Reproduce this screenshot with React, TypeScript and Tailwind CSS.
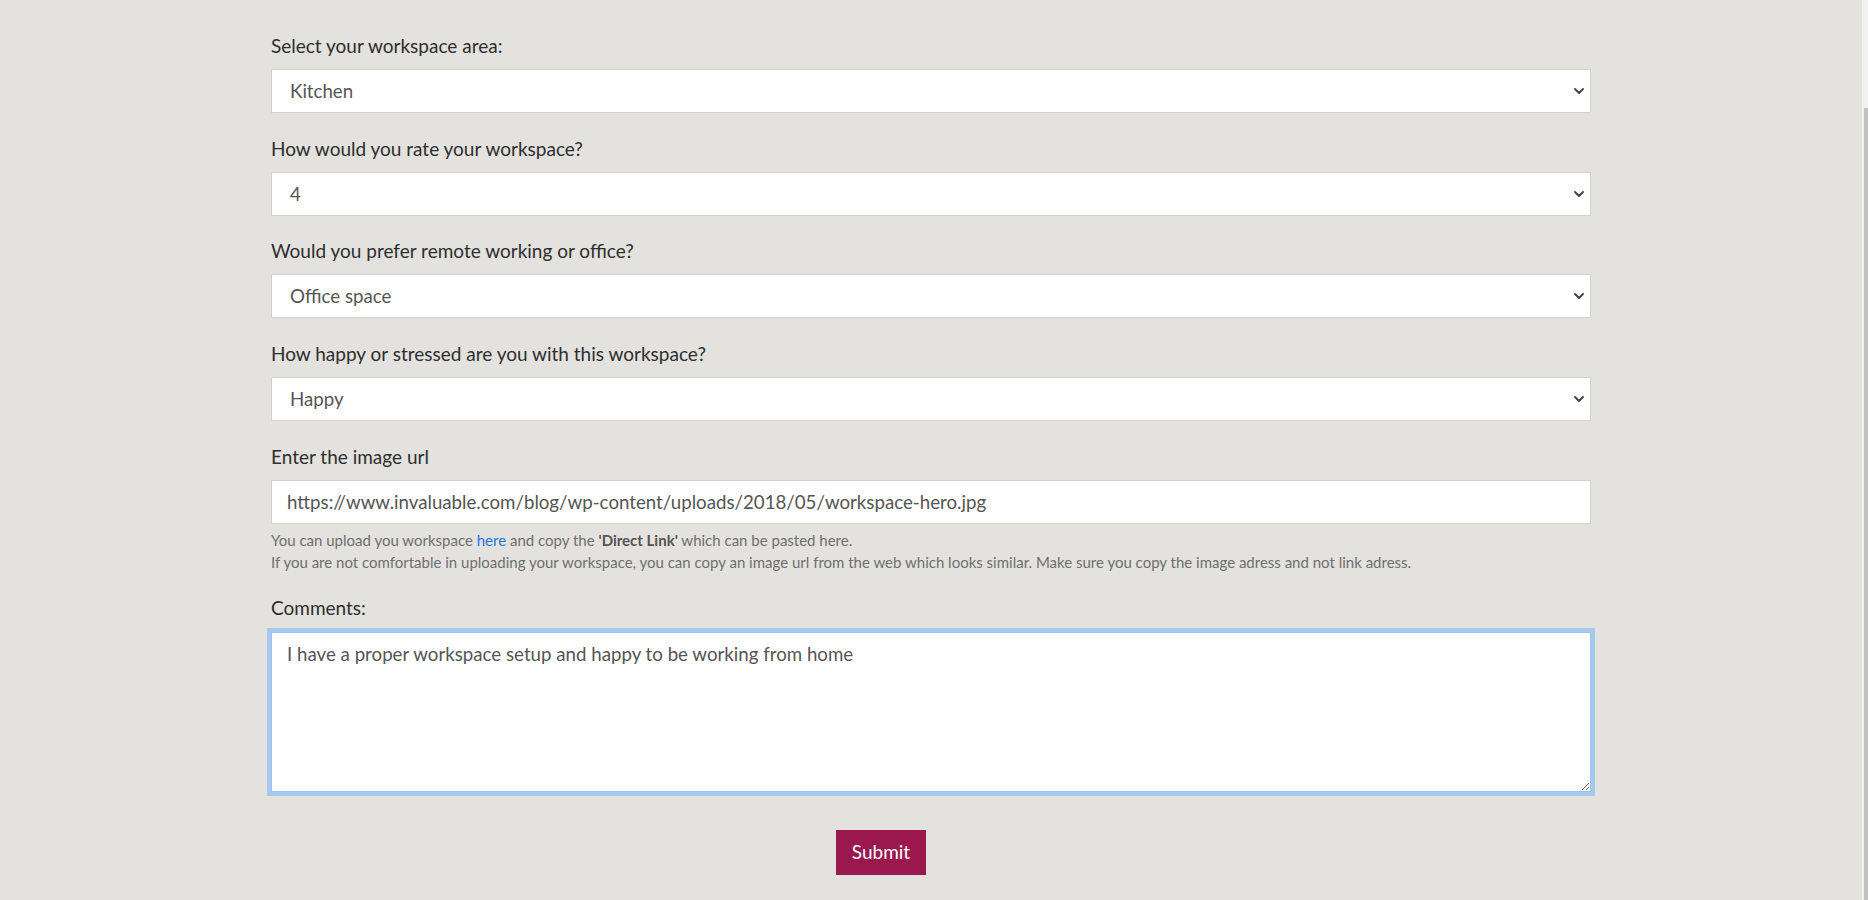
import React from 'react';

const font = { fontFamily: 'Lato, "Open Sans", sans-serif' };

function Chevron() {
  return (
    <svg
      className="pointer-events-none absolute right-[7px] top-1/2 -translate-y-1/2"
      width="10"
      height="6"
      viewBox="0 0 10 6"
      fill="none"
    >
      <polyline points="1,1 5,5 9,1" stroke="#3f3f3f" strokeWidth="1.8" strokeLinecap="round" strokeLinejoin="round" />
    </svg>
  );
}

function SelectField({ label, value, options }: { label: string; value: string; options: string[] }) {
  return (
    <div className="mb-[21.7px]">
      <label className="block text-[19px] leading-[27px] text-[#2e2e2e] mb-[10px]">{label}</label>
      <div className="relative">
        <select
          defaultValue={value}
          className="block w-full h-[44px] appearance-none bg-white border border-[#d2d2d0] px-[18px] text-[18.7px] text-[#555] outline-none"
          style={font}
        >
          {options.map((o) => (
            <option key={o}>{o}</option>
          ))}
        </select>
        <Chevron />
      </div>
    </div>
  );
}

export default function App() {
  return (
    <div className="flex h-screen overflow-hidden bg-[#e3e2df]" style={font}>
      <div className="flex-1">
        <div className="w-[1320px] mx-auto pt-[32px]">
          <SelectField label="Select your workspace area:" value="Kitchen" options={['Kitchen', 'Bedroom', 'Living room', 'Office']} />
          <SelectField label="How would you rate your workspace?" value="4" options={['1', '2', '3', '4', '5']} />
          <SelectField label="Would you prefer remote working or office?" value="Office space" options={['Remote working', 'Office space']} />
          <SelectField label="How happy or stressed are you with this workspace?" value="Happy" options={['Happy', 'Neutral', 'Stressed']} />

          <div className="mb-[21px]">
            <label className="block text-[19px] leading-[27px] text-[#2e2e2e] mb-[10px]">Enter the image url</label>
            <input
              type="text"
              defaultValue="https://www.invaluable.com/blog/wp-content/uploads/2018/05/workspace-hero.jpg"
              className="block w-full h-[44px] bg-white border border-[#d2d2d0] px-[15px] text-[18.7px] text-[#555] outline-none"
              style={font}
            />
            <div className="mt-[5px] text-[15px] leading-[22px] text-[#6f6f6f]">
              <p>
                You can upload you workspace <a href="#" className="text-[#2477e0]">here</a> and copy the{' '}
                <b className="font-bold text-[#555]">'Direct Link'</b> which can be pasted here.
              </p>
              <p>
                If you are not comfortable in uploading your workspace, you can copy an image url from the web which
                looks similar. Make sure you copy the image adress and not link adress.
              </p>
            </div>
          </div>

          <div>
            <label className="block text-[19px] leading-[27px] text-[#2e2e2e] mb-[11px]">Comments:</label>
            <textarea
              defaultValue="I have a proper workspace setup and happy to be working from home"
              className="block w-full h-[160px] bg-white border border-[#9dc1ec] px-[15px] py-[8px] text-[18.7px] leading-[27px] text-[#555] outline-none shadow-[0_0_0_4px_#a9c8ee]"
              style={font}
            />
          </div>

          <div className="mt-[38px] pl-[565px]">
            <button className="h-[45px] w-[90px] bg-[#9b184f] text-white text-[19px]" style={font}>
              Submit
            </button>
          </div>
        </div>
      </div>

      <div className="w-[6px] bg-[#f1f1f1] flex flex-col">
        <div className="h-[108px]" />
        <div className="flex-1 ml-[2px] bg-[#c1c1c1]" />
      </div>
    </div>
  );
}
